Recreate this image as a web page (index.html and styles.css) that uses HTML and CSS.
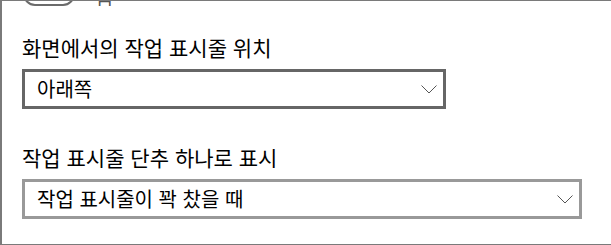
FILE: index.html
```html
<!DOCTYPE html>
<html lang="ko">
<head>
  <meta charset="UTF-8" />
  <title>작업 표시줄</title>
  <link rel="stylesheet" href="styles.css">
</head>
<body>

<div class="panel">

  <div class="toggle-row">
    <span class="toggle"></span>
    <span class="toggle-text">끔</span>
  </div>

  <div class="setting">
    <div class="label">화면에서의 작업 표시줄 위치</div>
    <div class="combo focused">
      <span class="value">아래쪽</span>
      <svg class="chevron" width="16" height="9" viewBox="0 0 16 9">
        <path d="M0.5 0.5 L8 8 L15.5 0.5" fill="none" stroke="#555" stroke-width="1" />
      </svg>
    </div>
  </div>

  <div class="setting">
    <div class="label">작업 표시줄 단추 하나로 표시</div>
    <div class="combo wide">
      <span class="value">작업 표시줄이 꽉 찼을 때</span>
      <svg class="chevron" width="16" height="9" viewBox="0 0 16 9">
        <path d="M0.5 0.5 L8 8 L15.5 0.5" fill="none" stroke="#555" stroke-width="1" />
      </svg>
    </div>
  </div>

</div>

</body>
</html>
```

FILE: styles.css
```css
body {
  margin: 0;
  font-family: 'Noto Sans CJK KR', 'Noto Sans', sans-serif;
  background: #ffffff;
  color: #000;
}
.panel {
  width: 607px;
  height: 243px;
  border: 1px solid #7a7a7a;
  border-left-width: 2px;
  border-right-width: 2px;
  padding: 0 0 0 20px;
  box-sizing: content-box;
  overflow: hidden;
}
.toggle-row {
  height: 5px;
  display: flex;
  align-items: flex-end;
  overflow: hidden;
  margin-bottom: 30px;
}
.toggle {
  display: block;
  flex: none;
  margin-left: 1px;
  width: 48px;
  height: 20px;
  border: 2px solid #6b6b6b;
  border-radius: 12px;
}
.toggle-text {
  margin-left: 21px;
  font-size: 19px;
  line-height: 16px;
  color: #555;
}
.setting {
  margin-bottom: 37px;
}
.label {
  font-size: 21px;
  line-height: 22px;
  margin-bottom: 11px;
}
.combo {
  display: flex;
  align-items: center;
  justify-content: space-between;
  width: 424px;
  height: 40px;
  box-sizing: border-box;
  border: 3px solid #666;
  padding: 0 6px 0 12px;
}
.combo.wide {
  width: 560px;
  border-color: #999;
}
.value {
  font-size: 20px;
  line-height: 22px;
}
.chevron {
  display: block;
}
```
